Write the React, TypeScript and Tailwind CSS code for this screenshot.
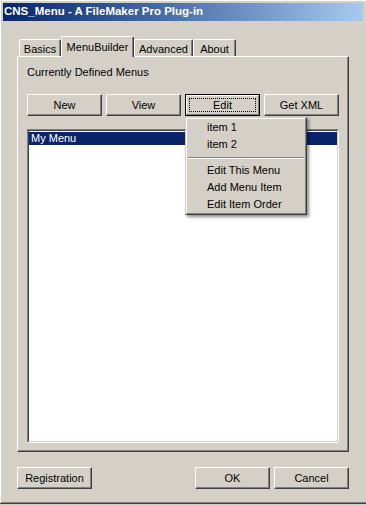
import React from 'react';

const raised =
  'border border-t-white border-l-white border-r-[#404040] border-b-[#404040] shadow-[inset_-1px_-1px_0_#808080]';

function Button({ label, className = '' }: { label: string; className?: string }) {
  return (
    <div className={`flex h-[22px] w-[75px] items-center justify-center bg-[#d4d0c8] ${raised} ${className}`}>
      {label}
    </div>
  );
}

function DefaultButton({ label }: { label: string }) {
  return (
    <div className="h-[22px] w-[75px] border border-black">
      <div className="h-full w-full border border-t-white border-l-white border-r-[#808080] border-b-[#808080] p-[2px]">
        <div className="flex h-full w-full items-center justify-center border border-dotted border-black">
          {label}
        </div>
      </div>
    </div>
  );
}

const tabs = [
  { label: 'Basics', w: 'w-[42px]' },
  { label: 'MenuBuilder', w: 'w-[73px]', active: true },
  { label: 'Advanced', w: 'w-[59px]' },
  { label: 'About', w: 'w-[43px]' },
];

const menuItems = ['item 1', 'item 2', '-', 'Edit This Menu', 'Add Menu Item', 'Edit Item Order'];

export default function App() {
  return (
    <div className="h-[506px] w-[366px] bg-[#d4d0c8] font-['Liberation_Sans',Arial,sans-serif] text-[11px] text-black">
      <div className="flex h-[504px] w-[366px] flex-col border-b border-b-[#404040] px-[3px] pt-[3px] shadow-[inset_1px_1px_0_#ffffff,inset_0_-1px_0_#808080]">
        {/* Title bar */}
        <div className="flex h-[18px] items-center bg-gradient-to-r from-[#0a246a] to-[#a6caf0] pl-[1px] text-[11.5px] font-bold text-white">
          CNS_Menu - A FileMaker Pro Plug-in
        </div>

        <div className="flex flex-col pl-[14px]">
          {/* Tab strip */}
          <div className="mt-[15px] flex h-[20px] items-end pl-[2px]">
            {tabs.map((t) =>
              t.active ? (
                <div
                  key={t.label}
                  className={`relative z-10 -mb-[1px] flex h-[21px] ${t.w} items-start justify-center rounded-t-[2px] border-l border-t border-r border-l-white border-t-white border-r-[#404040] bg-[#d4d0c8] pt-[2px] shadow-[inset_-1px_0_0_#808080]`}
                >
                  {t.label}
                </div>
              ) : (
                <div
                  key={t.label}
                  className={`flex h-[17px] ${t.w} items-start justify-center rounded-t-[2px] border-l border-t border-r border-l-white border-t-white border-r-[#404040] pt-[1px] shadow-[inset_-1px_0_0_#808080]`}
                >
                  {t.label}
                </div>
              )
            )}
          </div>

          {/* Tab panel */}
          <div className={`relative flex h-[396px] w-[332px] flex-col px-[9px] pt-[9px] ${raised}`}>
            <div className="h-[13px] leading-[13px]">Currently Defined Menus</div>

            <div className="mt-[15px] flex gap-[4px]">
              <Button label="New" />
              <Button label="View" />
              <DefaultButton label="Edit" />
              <Button label="Get XML" />
            </div>

            {/* List box */}
            <div className="mt-[13px] h-[314px] w-[312px] border border-t-[#808080] border-l-[#808080] border-r-white border-b-white">
              <div className="h-full w-full border border-t-[#404040] border-l-[#404040] border-r-[#d4d0c8] border-b-[#d4d0c8] bg-white pt-[1px]">
                <div className="h-[13px] bg-[#0a246a] pl-[2px] leading-[13px] text-white">My Menu</div>
              </div>
            </div>

            {/* Popup menu */}
            <div className="absolute left-[167px] top-[60px] z-20 w-[122px] border border-t-[#d4d0c8] border-l-[#d4d0c8] border-r-[#404040] border-b-[#404040] bg-[#d4d0c8] shadow-[2px_2px_3px_rgba(0,0,0,0.45)]">
              <div className="border border-t-white border-l-white border-r-[#808080] border-b-[#808080]">
                {menuItems.map((m, i) =>
                  m === '-' ? (
                    <div key={i} className="flex h-[9px] items-center px-[1px]">
                      <div className="h-[2px] w-full border-t border-t-[#808080] border-b border-b-white" />
                    </div>
                  ) : (
                    <div key={i} className="h-[17px] pl-[20px] leading-[17px]">
                      {m}
                    </div>
                  )
                )}
              </div>
            </div>
          </div>

          {/* Bottom buttons */}
          <div className="mt-[15px] flex w-[332px] items-center">
            <Button label="Registration" />
            <div className="flex-1" />
            <Button label="OK" />
            <Button label="Cancel" className="ml-[4px]" />
          </div>
        </div>
      </div>
    </div>
  );
}
